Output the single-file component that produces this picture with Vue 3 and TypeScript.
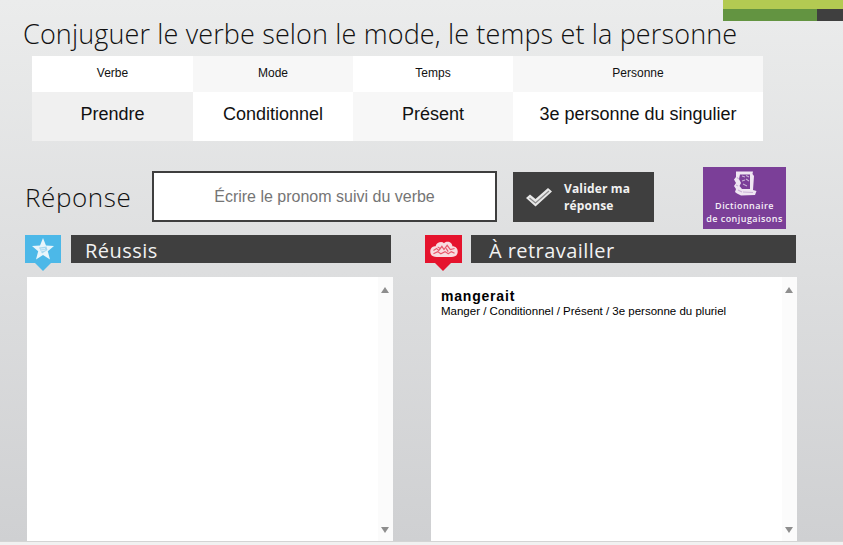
<script setup lang="ts">
const headers = [
  { label: 'Verbe', value: 'Prendre' },
  { label: 'Mode', value: 'Conditionnel' },
  { label: 'Temps', value: 'Présent' },
  { label: 'Personne', value: '3e personne du singulier' },
];
</script>

<template>
  <div class="page">
    <div class="top_strip">
      <div class="strip_lime"></div>
      <div class="strip_row">
        <div class="strip_green"></div>
        <div class="strip_dark"></div>
      </div>
    </div>

    <h1 class="title">Conjuguer le verbe selon le mode, le temps et la personne</h1>

    <div class="verb_table">
      <template v-for="h in headers" :key="h.label">
        <div class="cell head">{{ h.label }}</div>
      </template>
      <template v-for="h in headers" :key="h.value">
        <div class="cell val">{{ h.value }}</div>
      </template>
    </div>

    <div class="answer_row">
      <div class="answer_label">Réponse</div>
      <div class="answer_input">Écrire le pronom suivi du verbe</div>
      <button class="validate">
        <svg width="28" height="22" viewBox="0 0 28 22">
          <path d="M1 12 L5 8.5 L10.5 13 L23 2 L27 5.5 L10.5 20.5 Z" fill="#e8e8e8" />
          <path d="M4.5 12 L10.5 17 L24 5" fill="none" stroke="#8c8c8c" stroke-width="1.3" />
        </svg>
        <span>Valider ma<br />réponse</span>
      </button>
      <div class="dico">
        <svg width="24" height="25" viewBox="0 0 24 25">
          <path d="M3 0.5 H20 L19.5 3 L21 5 L20 19 L23.5 20 L22 24 L8 24.5 L4 22.5 L2 21 L3 18 L1 15 L3 12 L1 8.5 L3 6 Z" fill="#efe6f2" />
          <path d="M7 3.5 H17 V18 H9 L6.5 15 L8 12 L6 8 Z" fill="#7b3f98" />
          <path d="M9 5 L12 6 M13 8 L16 10 M9 10 L12 9 M10 13 L14 15 M13 4.5 L16 6 M4 6.5 L6 8 M3 14 L5 15 M5 19 L9 21 M10 21 L20 21.5" stroke="#c9b2d6" stroke-width="1.1" fill="none" />
        </svg>
        <div class="dico_text">Dictionnaire<br />de conjugaisons</div>
      </div>
    </div>

    <div class="panels">
      <section class="panel left">
        <div class="panel_head">
          <div class="badge blue">
            <svg width="24" height="24" viewBox="0 0 24 24">
              <path d="M12 1 L15 8.6 L23 9 L16.8 14.2 L19 22.5 L12 18 L5 22.5 L7.2 14.2 L1 9 L9 8.6 Z" fill="#e8f5fb" />
              <path d="M8 10.5 L15.5 9.5 L16.5 13 L11 16.5 Z" fill="#a6d8f0" />
              <path d="M9.5 12 L14 11.5 M10 14 L14.5 13" stroke="#e8f5fb" stroke-width="0.8" fill="none" />
            </svg>
          </div>
          <div class="bar">Réussis</div>
        </div>
        <div class="box">
          <div class="box_content"></div>
          <div class="scroll">
            <i class="arrow up"></i>
            <i class="arrow down"></i>
          </div>
        </div>
      </section>

      <section class="panel right">
        <div class="panel_head">
          <div class="badge red">
            <svg width="30" height="19" viewBox="0 0 28 18">
              <path d="M1 11 C1 7 4 6 6 6 C7 2 12 1 14 3 C17 0 22 2 22 6 C25 6 27 8 27 11 C27 15 24 16 21 16 H7 C4 16 1 15 1 11 Z" fill="#f8dce0" />
              <path d="M4 10 L7 8 L9 10 L12 6 L14 9 L17 5 L20 9 L24 8 M4 13 L8 11 L11 13 L15 11 L18 13 L21 11 L24 12.5 M8 6.5 L11 8.5 M16 8 L18 11" fill="none" stroke="#e8566a" stroke-width="1.1" />
            </svg>
          </div>
          <div class="bar">À retravailler</div>
        </div>
        <div class="box">
          <div class="box_content">
            <div class="word">mangerait</div>
            <div class="detail">Manger / Conditionnel / Présent / 3e personne du pluriel</div>
          </div>
          <div class="scroll">
            <i class="arrow up"></i>
            <i class="arrow down"></i>
          </div>
        </div>
      </section>
    </div>
  </div>
</template>

<style>
html, body {
  margin: 0;
  overflow: hidden;
}
</style>

<style scoped>
.page {
  position: relative;
  width: 843px;
  height: 545px;
  overflow: hidden;
  background: linear-gradient(to bottom, #ebecec 0, #cfd0d2 541px, #d4d4d4 541px, #d4d4d4 542px, #f1f1f1 542px);
  font-family: "Liberation Sans", Arial, sans-serif;
  color: #000;
}
.top_strip {
  position: absolute;
  top: 0;
  right: 0;
  width: 120px;
}
.strip_lime {
  height: 9px;
  background: #b3ca52;
}
.strip_row {
  display: flex;
  height: 12px;
}
.strip_green {
  width: 94px;
  background: #639441;
}
.strip_dark {
  flex: 1;
  background: #3f3f3f;
}
.title {
  margin: 0;
  padding: 15px 0 0 23px;
  height: 41px;
  font: 300 27px/37px "Open Sans", sans-serif;
  letter-spacing: 0.14px;
  color: #111;
  white-space: nowrap;
}
.verb_table {
  display: grid;
  grid-template-columns: 161px 160px 160px 250px;
  grid-template-rows: 36px 49px;
  margin-left: 32px;
  width: 731px;
}
.cell {
  display: flex;
  align-items: center;
  justify-content: center;
  box-sizing: border-box;
  background: #fff;
  color: #111;
}
.head {
  font-size: 12px;
  padding-bottom: 3px;
}
.val {
  font-size: 18px;
  padding-bottom: 4px;
}
.cell:nth-child(2),
.cell:nth-child(4),
.cell:nth-child(7) {
  background: #f7f7f7;
}
.cell:nth-child(5) {
  background: #f0f0f0;
}
.answer_row {
  display: flex;
  align-items: flex-start;
  height: 68px;
  margin-top: 26px;
  padding-left: 25px;
}
.answer_label {
  width: 127px;
  margin-top: 12px;
  font: 300 26px/36px "Open Sans", sans-serif;
  letter-spacing: 0.6px;
  color: #111;
}
.answer_input {
  box-sizing: border-box;
  width: 345px;
  height: 51px;
  margin-top: 4px;
  border: 2px solid #3e3e3e;
  background: #fff;
  color: #757575;
  font-size: 16px;
  line-height: 47px;
  text-align: center;
}
.validate {
  display: flex;
  align-items: center;
  gap: 11px;
  box-sizing: border-box;
  width: 141px;
  height: 50px;
  margin: 5px 0 0 16px;
  padding: 0 0 0 12px;
  border: none;
  background: #3f3f3f;
  color: #f2f2f2;
  font: 700 12px/17px "Open Sans", sans-serif;
  letter-spacing: 0.15px;
  text-align: left;
}
.dico {
  box-sizing: border-box;
  width: 83px;
  height: 62px;
  margin-left: 49px;
  padding-top: 4px;
  background: #7b3f98;
  text-align: center;
  color: #f5eff7;
}
.dico svg {
  display: block;
  margin: 0 auto;
}
.dico_text {
  margin-top: 3px;
  font: 600 9px/13px "Open Sans", sans-serif;
  letter-spacing: 0.45px;
  white-space: nowrap;
}
.panels {
  display: flex;
}
.panel {
  display: flex;
  flex-direction: column;
  box-sizing: border-box;
}
.panel.left {
  width: 425px;
  padding: 0 34px 0 25px;
}
.panel.right {
  width: 371px;
}
.panel_head {
  display: flex;
  height: 28px;
  gap: 10px;
}
.panel.right .panel_head {
  gap: 9px;
}
.badge {
  position: relative;
  display: flex;
  align-items: center;
  justify-content: center;
  width: 36px;
  flex: none;
}
.panel.right .badge {
  width: 37px;
}
.badge::after {
  content: "";
  position: absolute;
  top: 28px;
  left: 10px;
  border-style: solid;
  border-width: 8px 8px 0;
  border-color: transparent;
}
.blue {
  background: #4cb8e8;
}
.blue::after {
  border-top-color: #4cb8e8;
}
.red {
  background: #e5132d;
}
.red::after {
  border-top-color: #e5132d;
}
.bar {
  flex: 1;
  padding-left: 14px;
  background: #3f3f3f;
  color: #f2f2f2;
  font: 400 20px/31px "Open Sans", sans-serif;
  letter-spacing: 0.45px;
  overflow: hidden;
}
.panel.right .bar {
  padding-left: 18px;
}
.box {
  display: flex;
  flex: none;
  width: 366px;
  height: 264px;
  margin-top: 14px;
  background: #fff;
}
.panel.left .box {
  margin-left: 2px;
}
.panel.right .box {
  margin-left: 6px;
}
.box_content {
  flex: 1;
  padding: 11px 10px;
}
.word {
  font-size: 14px;
  font-weight: 700;
  line-height: 16px;
  letter-spacing: 0.8px;
}
.detail {
  font-size: 11.5px;
  line-height: 14px;
  white-space: nowrap;
}
.scroll {
  position: relative;
  width: 15px;
  background: #fbfbfb;
}
.arrow {
  position: absolute;
  left: 3px;
  border-style: solid;
  border-color: transparent;
}
.arrow.up {
  top: 10px;
  border-width: 0 4.5px 6px;
  border-bottom-color: #8e8e8e;
}
.arrow.down {
  bottom: 8px;
  border-width: 6px 4.5px 0;
  border-top-color: #8e8e8e;
}
</style>
